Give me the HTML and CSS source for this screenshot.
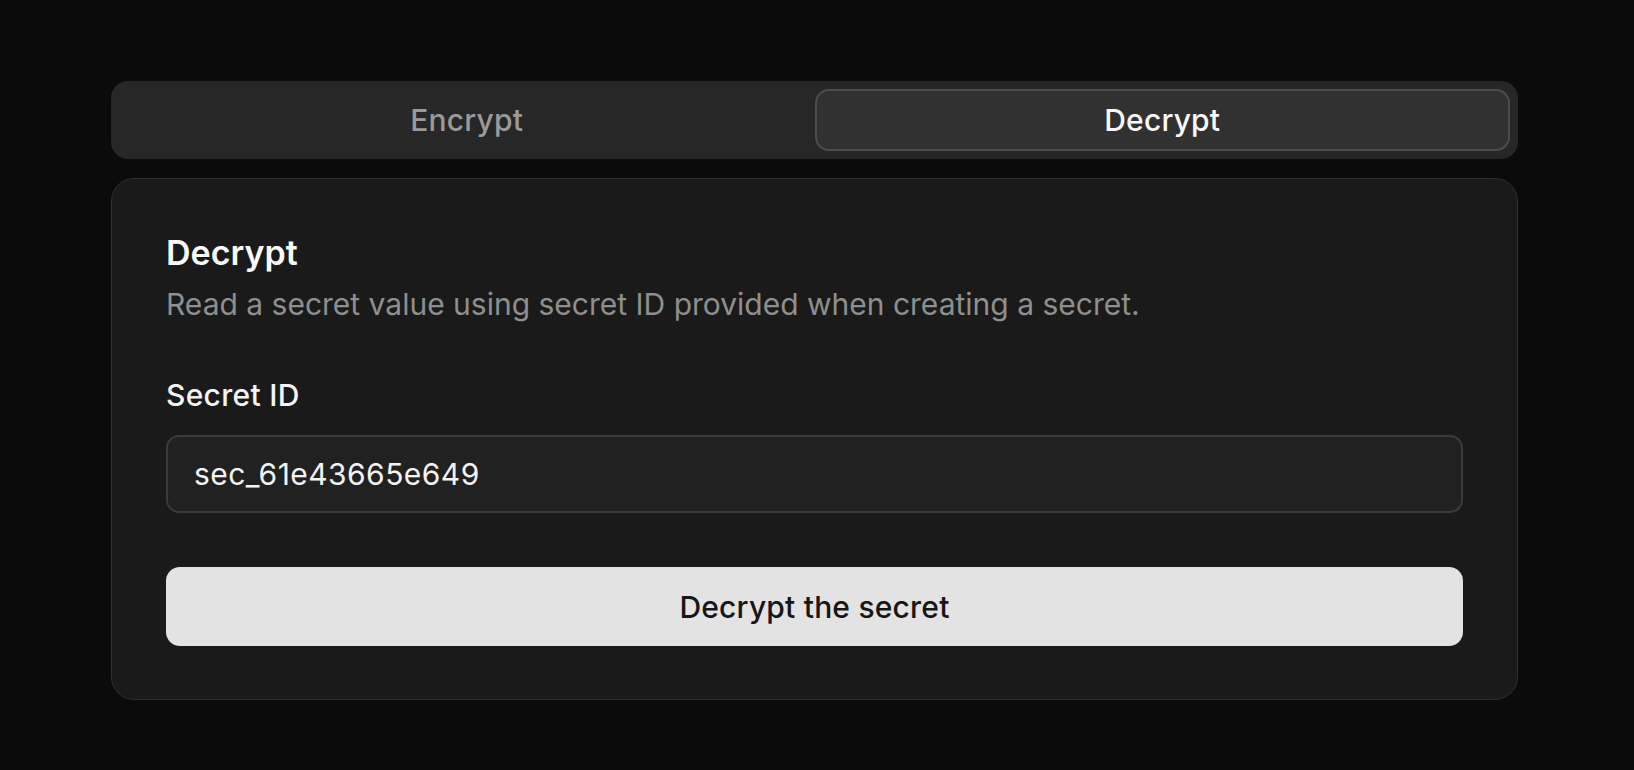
FILE: index.html
```html
<!DOCTYPE html>
<html lang="en">
<head>
<meta charset="utf-8">
<title>Decrypt</title>
<link rel="stylesheet" href="styles.css">
</head>
<body>
<main class="wrap">
  <nav class="tabs">
    <button class="tab">Encrypt</button>
    <button class="tab tab-active">Decrypt</button>
  </nav>
  <section class="card">
    <h2 class="card-title">Decrypt</h2>
    <p class="card-desc">Read a secret value using secret ID provided when creating a secret.</p>
    <label class="field-label" for="sid">Secret ID</label>
    <input class="field-input" id="sid" type="text" value="sec_61e43665e649">
    <button class="primary">Decrypt the secret</button>
  </section>
</main>
</body>
</html>
```

FILE: styles.css
```css
html, body {
  margin: 0;
  padding: 0;
  background: #0b0b0b;
  font-family: Inter, "Noto Sans", sans-serif;
  color: #f4f4f4;
}

.wrap {
  width: 1407px;
  margin: 81px 0 0 111px;
}

.tabs {
  display: grid;
  grid-template-columns: 1fr 1fr;
  height: 78px;
  box-sizing: border-box;
  padding: 8px;
  background: #272727;
  border-radius: 17px;
}

.tab {
  font-family: inherit;
  font-size: 30px;
  font-weight: 500;
  letter-spacing: 0.2px;
  color: #9a9a9a;
  background: transparent;
  border: 2px solid transparent;
  border-radius: 14px;
  padding: 0;
  cursor: pointer;
}

.tab-active {
  color: #fafafa;
  background: #313131;
  border-color: #4c4c4c;
}

.card {
  margin-top: 19px;
  background: #1a1a1a;
  border: 1px solid #2f2f2f;
  border-radius: 23px;
  padding: 54px 54px 53px;
  display: flex;
  flex-direction: column;
}

.card-title {
  margin: 0;
  font-size: 34px;
  line-height: 40px;
  font-weight: 600;
  color: #fafafa;
}

.card-desc {
  margin: 13px 0 0;
  font-size: 30px;
  line-height: 36px;
  color: #8f8f8f;
}

.field-label {
  margin-top: 55px;
  font-size: 30px;
  line-height: 36px;
  font-weight: 500;
  letter-spacing: 0.3px;
  color: #f4f4f4;
}

.field-input {
  margin-top: 22px;
  height: 78px;
  box-sizing: border-box;
  padding: 0 26px;
  background: #212121;
  border: 2px solid #3b3b3b;
  border-radius: 13px;
  font-family: inherit;
  font-size: 30px;
  letter-spacing: 0.45px;
  color: #f4f4f4;
  outline: none;
}

.primary {
  margin-top: 54px;
  height: 79px;
  background: #e3e3e3;
  border: none;
  border-radius: 14px;
  font-family: inherit;
  font-size: 30px;
  font-weight: 500;
  letter-spacing: 0.2px;
  color: #161616;
  cursor: pointer;
}
```
